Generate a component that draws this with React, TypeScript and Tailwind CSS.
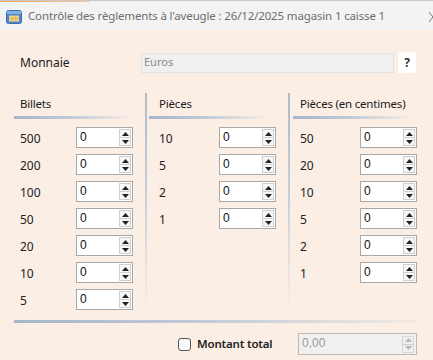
import React from "react";

const ui = { fontFamily: '"Noto Sans", "Open Sans", sans-serif' };
const mono = { fontFamily: '"Liberation Sans", Arial, sans-serif' };

function Spin({ disabled = false }: { disabled?: boolean }) {
  const c = disabled ? "#b8b8b8" : "#222";
  return (
    <div className={`flex flex-col w-[12px] h-[17px] border ${disabled ? "border-[#d8d8d8] bg-[#efefef]" : "border-[#cfcfcf] bg-[#f7f7f7]"}`}>
      <div className="flex-1 flex items-center justify-center border-b border-[#d0d0d0]">
        <svg width="7" height="4" viewBox="0 0 7 4"><polygon points="0,4 7,4 3.5,0" fill={c} /></svg>
      </div>
      <div className="flex-1 flex items-center justify-center">
        <svg width="7" height="4" viewBox="0 0 7 4"><polygon points="0,0 7,0 3.5,4" fill={c} /></svg>
      </div>
    </div>
  );
}

function NumBox({ w = 57 }: { w?: number }) {
  return (
    <div className="flex items-center h-[21px] border border-[#a8a8a8] bg-white pl-[3px] pr-[1px]" style={{ width: w }}>
      <span className="flex-1 text-[12px] text-[#111] leading-none -mt-[2px]" style={mono}>0</span>
      <Spin />
    </div>
  );
}

function Rows({ items, labelW, labelPl }: { items: string[]; labelW: number; labelPl: number }) {
  return (
    <div className="flex flex-col gap-[6px] mt-[8px]">
      {items.map((v) => (
        <div key={v} className="flex items-center h-[21px]">
          <div className="text-[12px] text-[#222] pt-[2px]" style={{ width: labelW, paddingLeft: labelPl }}>{v}</div>
          <NumBox />
        </div>
      ))}
    </div>
  );
}

function Header({ text, pl, lineW, lineMl }: { text: string; pl: number; lineW: number; lineMl: number }) {
  return (
    <div>
      <div className="h-[22px] flex items-center text-[11.5px] text-[#1a1a1a] tracking-[-0.2px]" style={{ paddingLeft: pl }}>{text}</div>
      <div className="h-[3px] mt-[1px] bg-gradient-to-r from-[#a6b5c9] via-[#c3ccd8] to-transparent" style={{ width: lineW, marginLeft: lineMl }} />
    </div>
  );
}

function VSep() {
  return <div className="w-[2px] h-[217px] bg-gradient-to-b from-[#aeb9c8] via-[#c9d0da] to-transparent" />;
}

export default function App() {
  return (
    <div className="w-[433px] h-[360px] overflow-hidden bg-[#fbeee5] flex flex-col" style={ui}>
      {/* title bar */}
      <div className="relative h-[30px] bg-[#f3f3f3] border-t border-[#c9c9c9] flex items-center pl-[6px] overflow-hidden">
        <div className="absolute left-0 top-[-1px] h-[2px] w-[90px] bg-gradient-to-r from-[#f0a050] to-[#f6c89a]" />
        <svg width="16" height="14" viewBox="0 0 16 14" className="mt-[2px]">
          <rect x="0.5" y="0.5" width="15" height="13" rx="2" fill="#4d86c6" stroke="#3a6fae" />
          <rect x="1" y="1" width="14" height="3" fill="#7fb0e6" />
          <rect x="3" y="5.5" width="10" height="6" fill="#f2d38a" />
          <path d="M3 8.5H13M6.3 5.5V11.5M9.7 5.5V11.5" stroke="#d9a84e" strokeWidth="0.7" />
        </svg>
        <span className="ml-[6px] text-[11.5px] text-[#6e6e6e] whitespace-nowrap tracking-[-0.15px]">Contrôle des règlements à l'aveugle : 26/12/2025 magasin 1 caisse 1</span>
        <svg width="8" height="10" viewBox="0 0 8 10" className="absolute right-[-4px] top-[11px]">
          <path d="M0 0L8 10M8 0L0 10" stroke="#777" strokeWidth="1" />
        </svg>
      </div>

      {/* Monnaie */}
      <div className="flex items-center mt-[22px] pl-[20px] h-[21px]">
        <div className="w-[121px] text-[12px] text-[#1a1a1a]">Monnaie</div>
        <div className="w-[253px] h-[20px] bg-[#f0f0f0] border border-[#e2e2e2] flex items-center pl-[2px] text-[11px] text-[#8a8a8a]">Euros</div>
        <div className="ml-[4px] w-[18px] h-[21px] bg-white rounded-[2px] flex items-center justify-center text-[12px] font-bold text-[#333]">?</div>
      </div>

      {/* columns */}
      <div className="flex mt-[20px] pl-[14px]">
        <div className="w-[131px]">
          <Header text="Billets" pl={6} lineW={121} lineMl={0} />
          <Rows items={["500", "200", "100", "50", "20", "10", "5"]} labelW={62} labelPl={6} />
        </div>
        <VSep />
        <div className="w-[141px]">
          <Header text="Pièces" pl={12} lineW={121} lineMl={2} />
          <Rows items={["10", "5", "2", "1"]} labelW={72} labelPl={12} />
        </div>
        <VSep />
        <div className="w-[130px]">
          <Header text="Pièces (en centimes)" pl={10} lineW={122} lineMl={3} />
          <Rows items={["50", "20", "10", "5", "2", "1"]} labelW={70} labelPl={10} />
        </div>
      </div>

      {/* bottom separator */}
      <div className="ml-[14px] w-[402px] h-[3px] mt-[10px] bg-gradient-to-r from-[#a6b5c9] via-[#c3ccd8] to-[#f3e9e2]" />

      <div className="flex items-center mt-[10px] h-[22px]">
        <div className="ml-[178px] w-[13px] h-[13px] border border-[#555] rounded-[3px] bg-[#f8f8f8]" />
        <div className="ml-[6px] w-[101px] text-[11.5px] font-semibold text-[#222] tracking-[-0.2px]">Montant total</div>
        <div className="w-[119px] h-[22px] border border-[#b8b8b8] bg-[#f0f0f0] flex items-center pl-[3px] pr-[2px]">
          <span className="flex-1 text-[12px] text-[#9a9a9a] -mt-[2px]" style={mono}>0,00</span>
          <Spin disabled />
        </div>
      </div>
    </div>
  );
}
